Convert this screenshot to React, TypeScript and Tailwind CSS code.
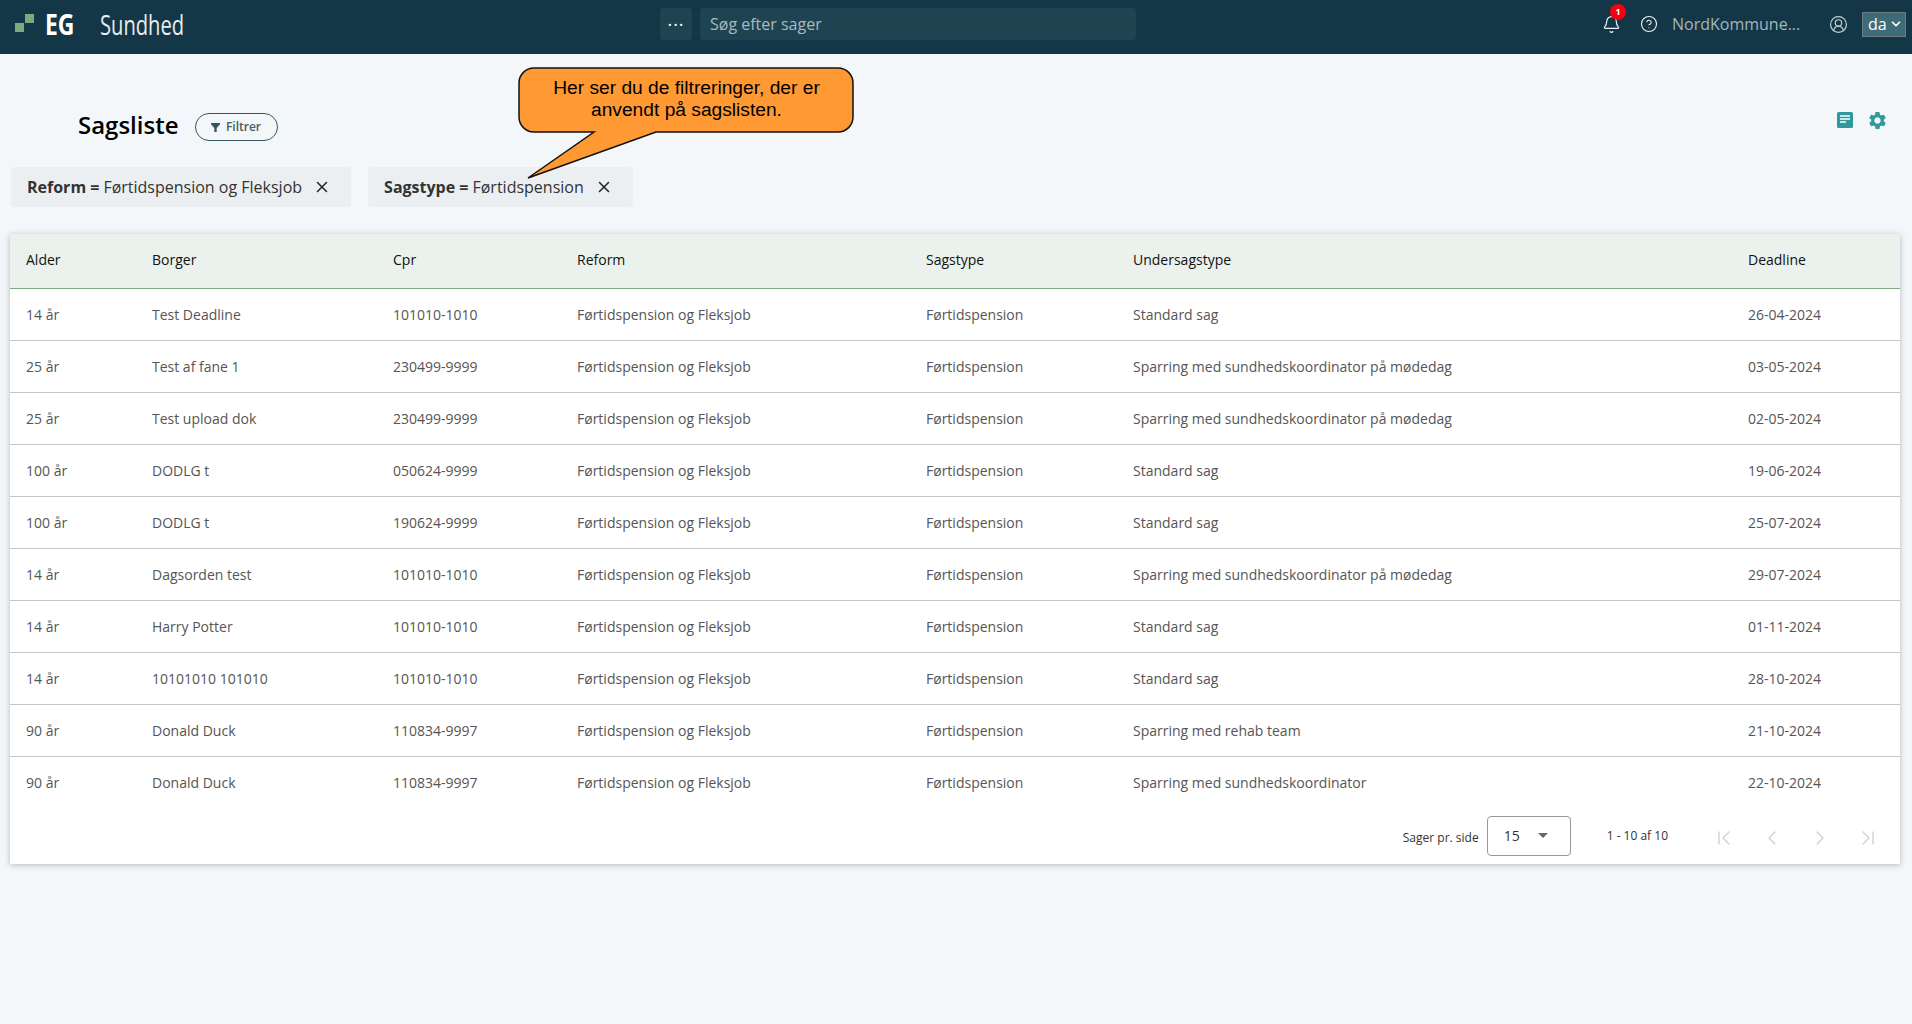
import React from "react";
import { Bell, ChevronDown, ChevronFirst, ChevronLast, ChevronLeft, ChevronRight, CircleHelp, CircleUserRound, X } from "lucide-react";
import { MdSettings } from "react-icons/md";

const rows = [
  ["14 år", "Test Deadline", "101010-1010", "Standard sag", "26-04-2024"],
  ["25 år", "Test af fane 1", "230499-9999", "Sparring med sundhedskoordinator på mødedag", "03-05-2024"],
  ["25 år", "Test upload dok", "230499-9999", "Sparring med sundhedskoordinator på mødedag", "02-05-2024"],
  ["100 år", "DODLG t", "050624-9999", "Standard sag", "19-06-2024"],
  ["100 år", "DODLG t", "190624-9999", "Standard sag", "25-07-2024"],
  ["14 år", "Dagsorden test", "101010-1010", "Sparring med sundhedskoordinator på mødedag", "29-07-2024"],
  ["14 år", "Harry Potter", "101010-1010", "Standard sag", "01-11-2024"],
  ["14 år", "10101010 101010", "101010-1010", "Standard sag", "28-10-2024"],
  ["90 år", "Donald Duck", "110834-9997", "Sparring med rehab team", "21-10-2024"],
  ["90 år", "Donald Duck", "110834-9997", "Sparring med sundhedskoordinator", "22-10-2024"],
];

const cols = "grid grid-cols-[126px_241px_184px_349px_207px_615px_1fr] px-4 items-center";

const Chip = ({ label, value }: { label: string; value: string }) => (
  <div className="flex h-10 items-center rounded bg-[#ebeff2] pl-4 pr-[20px] text-base text-[#333]">
    <b className="font-bold">{label} =</b>
    <span className="ml-1">{value}</span>
    <X className="ml-[11px] h-[18px] w-[18px] text-[#222]" strokeWidth={2} />
  </div>
);

const App = () => {
  return (
    <div className="relative min-h-[1024px] bg-[#f3f7fa] font-['Open_Sans',sans-serif]">
      <header className="flex h-[54px] items-center bg-[#133747] pb-[6px] text-white">
        <div className="flex w-[660px] items-center pl-[15px]">
          <svg width="20" height="20" viewBox="0 0 20 20" className="shrink-0">
            <rect x="0" y="9" width="9" height="9" fill="#7eaa7f" />
            <rect x="10" y="0" width="9" height="9" fill="#7eaa7f" />
          </svg>
          <span className="ml-[10px] origin-left scale-x-[0.82] text-[28px] font-bold leading-none">EG</span>
          <span className="ml-[19px] origin-left scale-x-[0.72] text-[28px] leading-none text-[#e8eef0]">Sundhed</span>
        </div>
        <div className="flex h-8 w-8 items-center justify-center rounded bg-[#1f4451] text-lg leading-none tracking-[1px]">···</div>
        <div className="ml-2 flex h-8 w-[436px] items-center rounded bg-[#1f4451] px-[10px] text-base text-[#a9b9bf]">Søg efter sager</div>
        <div className="ml-auto flex items-center pr-[6px]">
          <div className="relative">
            <Bell className="h-[19px] w-[19px] text-[#eef2f4]" strokeWidth={1.5} />
            <span className="absolute -right-[5px] -top-[11px] flex h-4 w-4 items-center justify-center rounded-full bg-[#f5000f] text-[9px] font-bold">1</span>
          </div>
          <CircleHelp className="ml-[19px] h-[18px] w-[18px] text-[#eef2f4]" strokeWidth={1.5} />
          <span className="ml-[14px] w-[145px] text-base font-medium text-[#a4b5bb]">NordKommune...</span>
          <CircleUserRound className="ml-[12px] h-[19px] w-[19px] text-[#c4d0d4]" strokeWidth={1.5} />
          <div className="ml-[14px] flex h-[25px] w-[44px] items-center border border-[#6b7a80] bg-[#3e6b78] pl-[5px] text-base leading-none">
            da
            <ChevronDown className="ml-[2px] h-[14px] w-[14px]" strokeWidth={3} />
          </div>
        </div>
      </header>

      <div className="flex h-[113px] items-center pl-[78px] pr-[24px] pt-[29px]">
        <h1 className="text-2xl font-semibold text-black">Sagsliste</h1>
        <button className="ml-[16px] mt-[4px] flex h-7 w-[83px] items-center justify-center rounded-full border border-[#35565f] text-xs font-semibold text-[#4a5d63]">
          <svg width="9" height="9" viewBox="0 0 10 10" className="mr-[6px]"><path d="M0 0h10v1.5L6.3 5.5V10H3.7V5.5L0 1.500z" fill="#35565f" /></svg>
          Filtrer
        </button>
        <div className="ml-auto -mt-[10px] flex items-center gap-[13px]">
          <svg width="18" height="18" viewBox="0 0 18 18">
            <rect x="1" y="1" width="16" height="16" rx="1.500" fill="#2f9a9e" />
            <path d="M4 5h10M4 8h10M4 11h6" stroke="#fff" strokeWidth="1.400" />
          </svg>
          <MdSettings className="h-[21px] w-[21px] text-[#2f9a9e]" />
        </div>
      </div>

      <div className="flex gap-[17px] pl-[11px]">
        <Chip label="Reform" value="Førtidspension og Fleksjob" />
        <Chip label="Sagstype" value="Førtidspension" />
      </div>

      <div className="ml-[10px] mr-[12px] mt-[27px] bg-white shadow-[0_1px_6px_rgba(0,0,0,0.25)]">
        <div className={`${cols} h-[55px] border-b border-[#7eaa7f] bg-[#ebf1ec] pb-[2px] text-sm text-[#111]`}>
          <span>Alder</span><span>Borger</span><span>Cpr</span><span>Reform</span><span>Sagstype</span><span>Undersagstype</span><span>Deadline</span>
        </div>
        {rows.map((r, i) => (
          <div key={i} className={`${cols} h-[52px] text-sm text-[#555] ${i < rows.length - 1 ? "border-b border-[#c6c6c6]" : ""}`}>
            <span>{r[0]}</span>
            <span>{r[1]}</span>
            <span>{r[2]}</span>
            <span>Førtidspension og Fleksjob</span>
            <span>Førtidspension</span>
            <span>{r[3]}</span>
            <span>{r[4]}</span>
          </div>
        ))}
        <div className="flex h-[55px] items-center pr-[20px] text-xs text-[#333]">
          <span className="ml-auto mt-[2px]">Sager pr. side</span>
          <div className="mb-[2px] ml-2 flex h-10 w-[84px] items-center rounded border border-[#999] pl-4 text-sm">
            15
            <span className="ml-[18px] h-0 w-0 border-x-[5px] border-t-[5px] border-x-transparent border-t-[#666]" />
          </div>
          <span className="ml-9 mb-[2px]">1 - 10 af 10</span>
          <div className="ml-[44px] mt-[2px] flex items-center gap-[24px] text-[#d4d4d4]">
            <ChevronFirst className="h-[24px] w-[24px]" strokeWidth={1.5} />
            <ChevronLeft className="h-[24px] w-[24px]" strokeWidth={1.5} />
            <ChevronRight className="h-[24px] w-[24px]" strokeWidth={1.5} />
            <ChevronLast className="h-[24px] w-[24px]" strokeWidth={1.5} />
          </div>
        </div>
      </div>

      {/* callout over the filter chips */}
      <div className="absolute left-[518px] top-[67px] h-[112px] w-[337px]">
        <svg width="337" height="112" viewBox="0 0 337 112" className="absolute inset-0">
          <path
            d="M16 1H320a15 15 0 0 1 15 15V50a15 15 0 0 1-15 15H138L10 111L76 65H16a15 15 0 0 1-15-15V16A15 15 0 0 1 16 1z"
            fill="#ff9933"
            stroke="#111"
            strokeWidth="1.500"
          />
        </svg>
        <p className="relative w-[337px] pt-[10px] text-center font-['Liberation_Sans',sans-serif] text-[19.2px] leading-[22px] text-black">
          Her ser du de filtreringer, der er
          <br />
          anvendt på sagslisten.
        </p>
      </div>
    </div>
  );
};

export default App;
